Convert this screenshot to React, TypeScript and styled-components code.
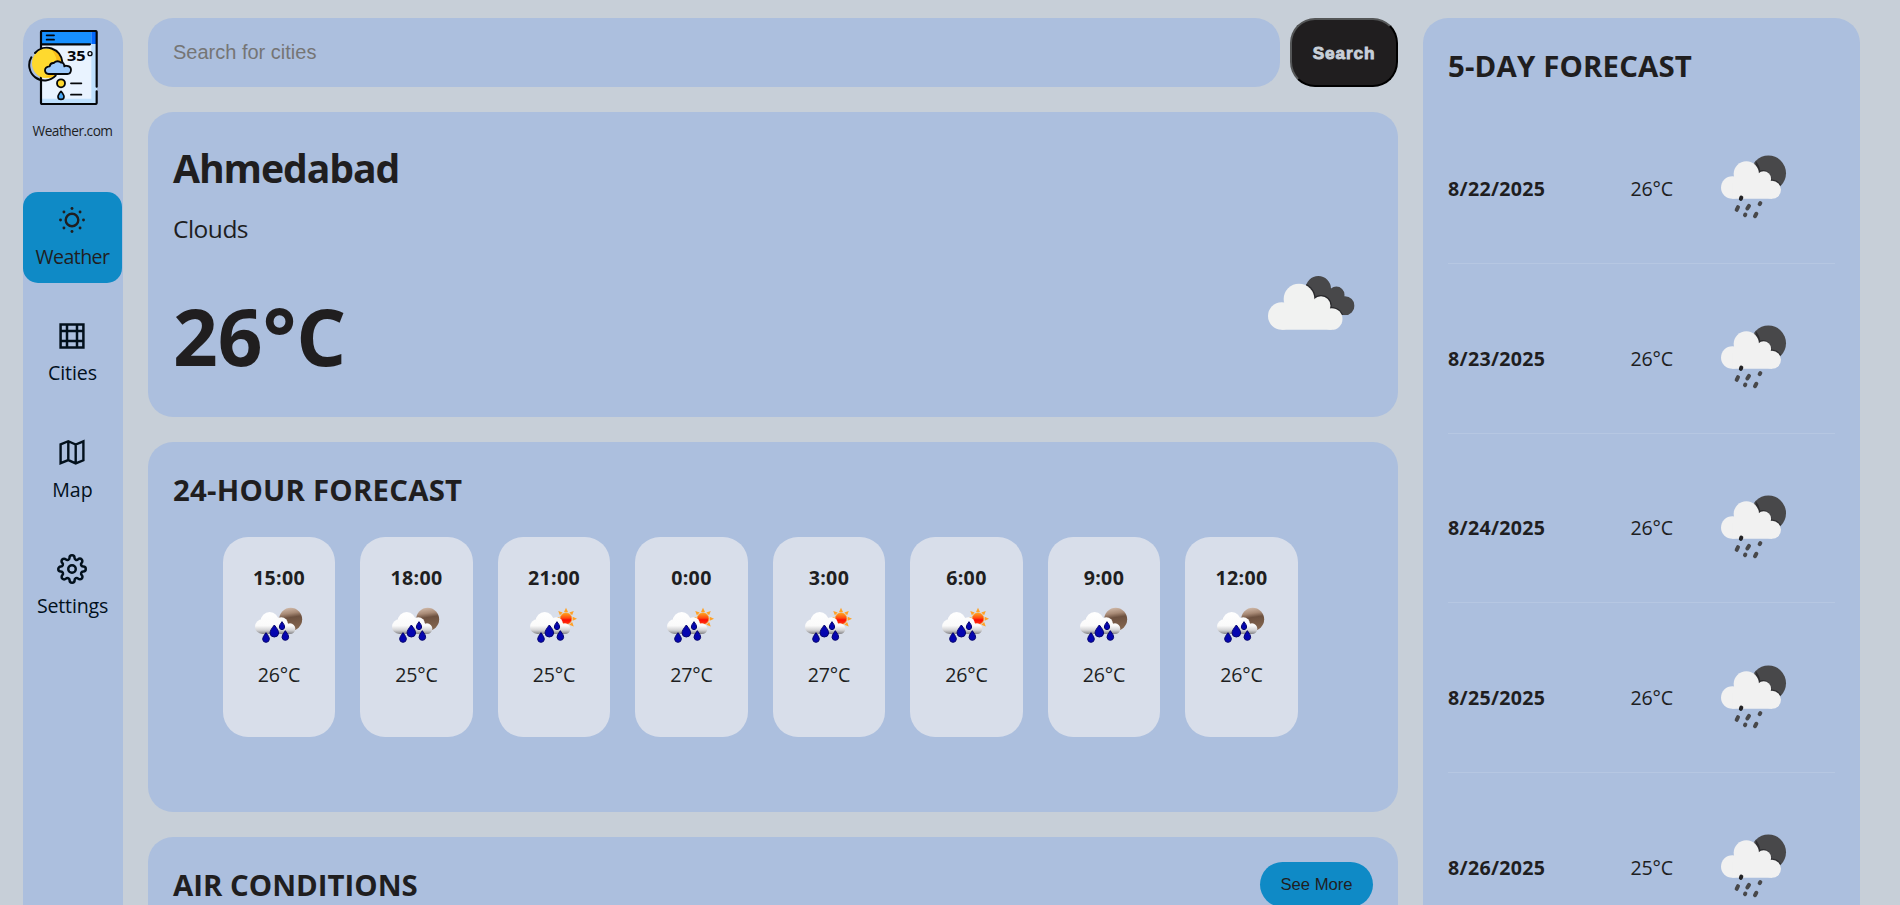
import React from 'react';
import styled, { createGlobalStyle } from 'styled-components';
import { FiSettings } from 'react-icons/fi';

const color = {
  page: '#c7cfd8',
  panel: '#acbfde',
  tile: '#d8deea',
  accent: '#0f8ac6',
  ink: '#201e1f',
  link: '#02101c',
};

const GlobalStyle = createGlobalStyle`
  * { box-sizing: border-box; }
  html, body { margin: 0; padding: 0; height: 905px; overflow: hidden; }
  body {
    background: ${color.page};
    color: ${color.ink};
    font-family: "Open Sans", "Noto Sans", sans-serif;
    font-size: 19.6px;
  }
  h1, h2, p { margin: 0; }
  svg { display: block; }
`;

const Page = styled.div`
  display: flex;
  align-items: flex-start;
  gap: 25px;
  height: 905px;
  padding: 18px 40px 0 23px;
  overflow: hidden;
`;

const Sidebar = styled.nav`
  display: flex;
  flex-direction: column;
  flex: none;
  width: 100px;
  height: 1200px;
  padding-top: 12px;
  border-radius: 25px;
  background: ${color.panel};
`;

const Brand = styled.div`
  display: flex;
  flex-direction: column;
  margin-bottom: 51px;
  padding-left: 5px;
`;

const BrandName = styled.span`
  margin: 16px 0 0 4.5px;
  font-size: 13.7px;
  line-height: 20px;
  letter-spacing: -0.5px;
`;

const Menu = styled.div`
  display: flex;
  flex-direction: column;
  gap: 25px;
  width: 99px;
`;

const MenuItem = styled.a<{ $active?: boolean }>`
  display: flex;
  flex-direction: column;
  align-items: center;
  gap: 8px;
  height: 91.33px;
  padding-top: 13px;
  border-radius: 15px;
  background: ${(p) => (p.$active ? color.accent : 'transparent')};
  color: ${(p) => (p.$active ? color.ink : color.link)};
  svg { margin-right: 1px; }
`;

const MenuLabel = styled.span<{ $tracking: number }>`
  line-height: 27px;
  letter-spacing: ${(p) => p.$tracking}px;
`;

const Main = styled.main`
  display: flex;
  flex-direction: column;
  flex: none;
  gap: 25px;
  width: 1250px;
`;

const SearchBar = styled.form`
  display: flex;
  gap: 10px;
  height: 69px;
`;

const SearchInput = styled.input`
  flex: 1;
  min-width: 0;
  padding: 0 25px;
  border: none;
  border-radius: 25px;
  outline: none;
  background: ${color.panel};
  font: 20px "Liberation Sans", Arial, sans-serif;
  &::placeholder { color: #757575; opacity: 1; }
`;

const SearchButton = styled.button`
  width: 108px;
  padding: 1px 0 0;
  border: 2px solid;
  border-color: #545657 #000 #000 #545657;
  border-radius: 25px;
  background: ${color.ink};
  color: ${color.page};
  font: bold 17.2px "Liberation Sans", Arial, sans-serif;
  letter-spacing: 0.9px;
  -webkit-text-stroke: 0.9px ${color.page};
`;

const Card = styled.section<{ $height: number }>`
  height: ${(p) => p.$height}px;
  padding: 28px 25px 0;
  border-radius: 25px;
  background: ${color.panel};
`;

const CurrentCard = styled(Card)`
  display: flex;
  justify-content: space-between;
`;

const CurrentIcon = styled.div`
  padding-top: 100.5px;
`;

const CityName = styled.h1`
  font-size: 39.2px;
  line-height: 56px;
  letter-spacing: -1.1px;
`;

const Condition = styled.p`
  margin-top: 16px;
  font-size: 24.5px;
  line-height: 34px;
  letter-spacing: -0.5px;
`;

const Temperature = styled.p`
  margin-top: 36.5px;
  font-size: 78.4px;
  font-weight: 700;
  line-height: 106px;
`;

const Title = styled.h2<{ $tracking: number }>`
  font-size: 29.4px;
  font-weight: 700;
  line-height: 40px;
  letter-spacing: ${(p) => p.$tracking}px;
`;

const HourList = styled.div`
  display: flex;
  gap: 25px;
  margin-top: 27px;
  padding-left: 49.7px;
`;

const HourTile = styled.div`
  display: flex;
  flex-direction: column;
  align-items: center;
  width: 112.5px;
  height: 200px;
  padding-top: 27px;
  border-radius: 25px;
  background: ${color.tile};
`;

const HourIcon = styled.div`
  height: 70px;
  padding-top: 4px;
`;

const Strong = styled.span`
  font-weight: 700;
  line-height: 27px;
  letter-spacing: 0.3px;
`;

const Value = styled.span`
  line-height: 27px;
  letter-spacing: -0.15px;
`;

const AirHeader = styled.div`
  display: flex;
  justify-content: space-between;
  align-items: flex-start;
`;

const MoreButton = styled.button`
  width: 113px;
  height: 45px;
  margin-top: -3px;
  padding: 0;
  border: none;
  border-radius: 22.5px;
  background: ${color.accent};
  color: ${color.ink};
  font: 16.67px "Liberation Sans", Arial, sans-serif;
`;

const Forecast = styled.aside`
  flex: 1;
  height: 1200px;
  padding: 28px 25px 0;
  border-radius: 25px;
  background: ${color.panel};
`;

const DayList = styled.div`
  margin-top: 8px;
`;

const DayRow = styled.div`
  display: grid;
  grid-template-columns: 182.5px 85.5px 1fr;
  align-items: center;
  height: 169.75px;
  padding-top: 20px;
  border-bottom: 1px solid rgba(255, 255, 255, 0.13);
  svg { margin-top: 1px; }
`;

function Logo() {
  return (
    <svg width="72" height="75" viewBox="24 30 216 225">
      <rect x="63" y="33" width="167" height="219" rx="3" fill="#e9f3ff" />
      <path d="M214 72h16v178H66v-14h148z" fill="#bfe0fd" />
      <rect x="64" y="34" width="150" height="38" fill="#1790ff" />
      <rect x="214" y="34" width="15" height="38" fill="#0468fa" />
      <path
        d="M63 88V36q0-3 3-3h160q4 0 4 3v164M230 214v35q0 3-4 3H66q-3 0-3-3v-79M63 73h147"
        fill="none" stroke="#05070a" strokeWidth="6.5" strokeLinecap="round"
      />
      <path d="M80 46h22M80 59h22" stroke="#05070a" strokeWidth="5.5" strokeLinecap="round" />
      <circle cx="81" cy="130" r="45" fill="#ffd92e" />
      <path d="M95 90a43 43 0 0 1 22 68q-20 15-42 13 30-8 35-35 2-28-15-46z" fill="#fbbc16" />
      <path
        d="M45 99A47 47 0 0 1 127 126M34 112A46 46 0 0 0 107 167"
        fill="none" stroke="#05070a" strokeWidth="6" strokeLinecap="round"
      />
      <path
        d="M86 162q-11-1-11-11 0-11 14-12 2-11 12-10 11-10 23-1 8-1 9 11 3-3 9-1 11 1 11 12-1 12-11 12z"
        fill="#9dc9fb" stroke="#05070a" strokeWidth="5.5" strokeLinejoin="round"
      />
      <text x="141" y="122" fontFamily="Open Sans" fontSize="42" fontWeight="700" fill="#05070a" textLength="56" lengthAdjust="spacingAndGlyphs">35</text>
      <circle cx="210" cy="101" r="6" fill="none" stroke="#05070a" strokeWidth="4" />
      <circle cx="123" cy="190" r="12" fill="#ffd92e" stroke="#05070a" strokeWidth="5.5" />
      <path d="M153 190h31M153 224h31" stroke="#05070a" strokeWidth="5.5" strokeLinecap="round" />
      <path d="M123 214q-9 11-9 16a9 8 0 0 0 18 0q0-5-9-16z" fill="#4aa8f5" stroke="#05070a" strokeWidth="5" strokeLinejoin="round" />
    </svg>
  );
}

function SunIcon() {
  const dots = [0, 1, 2, 3, 4, 5, 6, 7].map((i) => {
    const r = i % 2 ? 11.4 : 11.5;
    const a = (i * Math.PI) / 4;
    return <circle key={i} cx={15 + r * Math.cos(a)} cy={15 + r * Math.sin(a)} r="1.45" fill="currentColor" />;
  });
  return (
    <svg width="30" height="30" viewBox="0 0 30 30">
      <circle cx="15" cy="15" r="6.3" fill="none" stroke="currentColor" strokeWidth="2.4" />
      {dots}
    </svg>
  );
}

function GridIcon() {
  return (
    <svg width="30" height="30" viewBox="0 0 30 30" fill="none" stroke="currentColor" strokeWidth="2.5">
      <path d="M3.6 3.6h22.800v22.800H3.6zM10 3.6v22.800M20 3.6v22.800M3.6 10h22.800M3.6 20h22.800" />
    </svg>
  );
}

function MapIcon() {
  return (
    <svg width="30" height="30" viewBox="0 0.7 30 30" fill="none" stroke="currentColor" strokeWidth="2.4">
      <path d="M3.6 7L11.3 3.9 18.700 7.2 26.400 4.100V23L18.700 26.100 11.300 22.800 3.600 25.900zM11.300 3.900v18.900M18.700 7.200v18.900" />
    </svg>
  );
}

function CloudsIcon() {
  return (
    <svg width="125" height="125" viewBox="24 0 375 375">
      <defs>
        <clipPath id="backClouds">
          <circle cx="235" cy="143" r="38" />
          <circle cx="289" cy="161" r="24.5" />
          <circle cx="315" cy="194.500" r="28.500" />
          <path d="M235 150l54-5 20 30 6 48-70-20z" />
        </clipPath>
      </defs>
      <g clipPath="url(#backClouds)">
        <rect x="190" y="100" width="160" height="130" fill="#48484a" />
        <g fill="#28282b">
          <circle cx="177" cy="174" r="50" />
          <circle cx="243" cy="194" r="32" />
          <circle cx="275" cy="234" r="36" />
        </g>
      </g>
      <g fill="#f1f2f1">
        <circle cx="125" cy="225" r="41" />
        <circle cx="177" cy="174" r="46" />
        <circle cx="243" cy="194" r="28.500" />
        <circle cx="275" cy="234" r="32.500" />
        <path d="M125 266V190l52-10 66 10 32 20v56.500z" />
      </g>
    </svg>
  );
}

function RainIcon() {
  return (
    <svg width="75" height="75" viewBox="108 64.5 225 225">
      <circle cx="265" cy="131" r="53" fill="#48484a" />
      <g fill="#2e2e31">
        <path d="M227 94q12 14 13 29 26-7 37 28 16-1 26 15l-12 4-60-20z" />
      </g>
      <g fill="#f1f1f1">
        <circle cx="157" cy="174" r="34" />
        <circle cx="199" cy="133" r="38" />
        <circle cx="251" cy="148" r="22.500" />
        <circle cx="276" cy="181" r="27" />
        <path d="M157 208V145l94-5 25 20v48z" />
      </g>
      <g stroke="#48484a" strokeWidth="12" strokeLinecap="round">
        <path d="M170 241l4-8M202 237l5-8M239 224l2-3M195 257l1-2M225 260l4-7" />
        <path d="M182.500 208l1.500-4" stroke="#222224" />
      </g>
    </svg>
  );
}

function ShowerIcon({ day }: { day: boolean }) {
  const rays = [0, 1, 2, 3, 4, 5, 6, 7].map((i) => (
    <path key={i} d="M147 66l6-13 6 13z" fill="#ffa126" transform={`rotate(${i * 45} 153 86)`} />
  ));
  return (
    <svg width="62.500" height="62.500" viewBox="24 15 187.500 187.500">
      <defs>
        <linearGradient id="cloudShade" gradientUnits="userSpaceOnUse" x1="0" y1="65" x2="0" y2="133">
          <stop offset="0" stopColor="#ffffff" />
          <stop offset="0.62" stopColor="#fafafa" />
          <stop offset="0.82" stopColor="#d2d2d4" />
          <stop offset="1" stopColor="#7c7c80" />
        </linearGradient>
        <linearGradient id="moonShade" x1="0" y1="0" x2="0.15" y2="1">
          <stop offset="0" stopColor="#d8c2b2" />
          <stop offset="0.3" stopColor="#a88a76" />
          <stop offset="0.48" stopColor="#6d5140" />
          <stop offset="1" stopColor="#84664f" />
        </linearGradient>
        <linearGradient id="sunShade" x1="0" y1="0" x2="0" y2="1">
          <stop offset="0" stopColor="#ffa51e" />
          <stop offset="0.45" stopColor="#ff4a10" />
          <stop offset="0.6" stopColor="#fb0d05" />
          <stop offset="1" stopColor="#ff3a10" />
        </linearGradient>
      </defs>
      {day ? (
        <>
          {rays}
          <circle cx="153" cy="86" r="17.500" fill="url(#sunShade)" stroke="#ffa126" strokeWidth="2" />
        </>
      ) : (
        <circle cx="152" cy="88" r="34.500" fill="url(#moonShade)" />
      )}
      <g fill="url(#cloudShade)">
        <circle cx="67" cy="110" r="22" />
        <circle cx="89" cy="93" r="27" />
        <circle cx="124" cy="102" r="20" />
        <circle cx="150" cy="116" r="16" />
        <path d="M67 100l60-10 23 15v27H67z" />
      </g>
      <g fill="#0505b0" stroke="#05056e" strokeWidth="3">
        <path d="M78 128q-11 14-10 20 1 9 10 9t10-9q1-6-10-20z" />
        <path d="M103 105q-13 16-13 24 1 12 13 12t13-12q0-8-13-24z" />
        <path d="M126 95q-8 10-8 16 1 8 8 8t8-8q0-6-8-16z" />
        <path d="M136 122q-11 14-10 20 1 9 10 9t10-9q1-6-10-20z" />
      </g>
    </svg>
  );
}

const menu = [
  { label: 'Weather', tracking: -0.6, icon: <SunIcon />, active: true },
  { label: 'Cities', tracking: -0.1, icon: <GridIcon /> },
  { label: 'Map', tracking: 0, icon: <MapIcon /> },
  { label: 'Settings', tracking: -0.2, icon: <FiSettings size={30} /> },
];

const hours = [
  { time: '15:00', temp: 26, day: false },
  { time: '18:00', temp: 25, day: false },
  { time: '21:00', temp: 25, day: true },
  { time: '0:00', temp: 27, day: true },
  { time: '3:00', temp: 27, day: true },
  { time: '6:00', temp: 26, day: true },
  { time: '9:00', temp: 26, day: false },
  { time: '12:00', temp: 26, day: false },
];

const days = [
  { date: '8/22/2025', temp: 26 },
  { date: '8/23/2025', temp: 26 },
  { date: '8/24/2025', temp: 26 },
  { date: '8/25/2025', temp: 26 },
  { date: '8/26/2025', temp: 25 },
];

export default function App() {
  return (
    <>
      <GlobalStyle />
      <Page>
        <Sidebar>
          <Brand>
            <Logo />
            <BrandName>Weather.com</BrandName>
          </Brand>
          <Menu>
            {menu.map((item) => (
              <MenuItem key={item.label} $active={item.active}>
                {item.icon}
                <MenuLabel $tracking={item.tracking}>{item.label}</MenuLabel>
              </MenuItem>
            ))}
          </Menu>
        </Sidebar>
        <Main>
          <SearchBar>
            <SearchInput type="text" placeholder="Search for cities" />
            <SearchButton type="button">Search</SearchButton>
          </SearchBar>
          <CurrentCard $height={305}>
            <div>
              <CityName>Ahmedabad</CityName>
              <Condition>Clouds</Condition>
              <Temperature>26°C</Temperature>
            </div>
            <CurrentIcon>
              <CloudsIcon />
            </CurrentIcon>
          </CurrentCard>
          <Card $height={370}>
            <Title $tracking={0.22}>24-HOUR FORECAST</Title>
            <HourList>
              {hours.map((hour) => (
                <HourTile key={hour.time}>
                  <Strong>{hour.time}</Strong>
                  <HourIcon>
                    <ShowerIcon day={hour.day} />
                  </HourIcon>
                  <Value>{hour.temp}°C</Value>
                </HourTile>
              ))}
            </HourList>
          </Card>
          <Card $height={300}>
            <AirHeader>
              <Title $tracking={0}>AIR CONDITIONS</Title>
              <MoreButton type="button">See More</MoreButton>
            </AirHeader>
          </Card>
        </Main>
        <Forecast>
          <Title $tracking={0.15}>5-DAY FORECAST</Title>
          <DayList>
            {days.map((day) => (
              <DayRow key={day.date}>
                <Strong>{day.date}</Strong>
                <Value>{day.temp}°C</Value>
                <RainIcon />
              </DayRow>
            ))}
          </DayList>
        </Forecast>
      </Page>
    </>
  );
}
